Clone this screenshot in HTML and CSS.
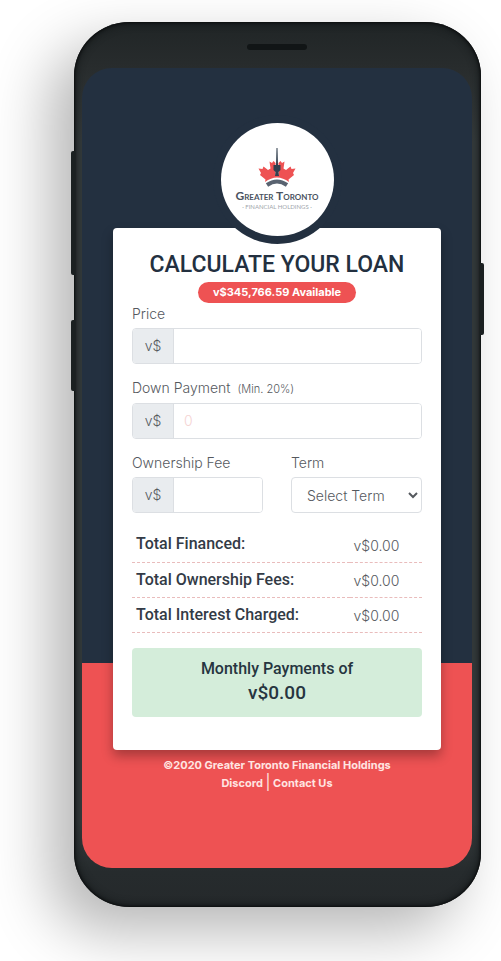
FILE: index.html
```html
<!DOCTYPE html>
<html lang="en">
<head>
<meta charset="utf-8">
<meta name="viewport" content="width=device-width, initial-scale=1">
<title>Calculate Your Loan</title>
<link rel="stylesheet" href="styles.css">
</head>
<body>
<div class="phone">
  <span class="side-key volume"></span>
  <span class="side-key assistant"></span>
  <span class="side-key power"></span>
  <div class="speaker"></div>
  <div class="screen">
    <div class="logo">
      <svg class="logo-mark" viewBox="0 0 40 40" aria-hidden="true">
        <path fill="#ee5253" d="M8 36 L8.500 33.500 L3 29 L4 27 L1.500 22.500 L5.500 23 L6.500 20.500 L11 24 L13.500 22.500 L12.500 15.500 L15 17 L16.500 15 L18.500 17 V29 H21.500 V17 L23.500 15 L25 17 L27.500 15.500 L26.500 22.500 L29 24 L33.500 20.500 L34.500 23 L38.500 22.500 L36 27 L37 29 L31.500 33.500 L32 36 Q20 27 8 36Z"/>
        <path fill="none" stroke="#596370" stroke-width="4" d="M10 39 Q20 32 30 39"/>
        <path fill="#33404f" d="M19.500 2H20.500L21 19H23.500V24L21.500 26L22 30H18L18.500 26L16.500 24V19H19Z"/>
      </svg>
      <span class="logo-name">Greater Toronto</span>
      <span class="logo-sub">· FINANCIAL HOLDINGS ·</span>
    </div>
    <main class="card">
      <h1>CALCULATE YOUR LOAN</h1>
      <span class="badge">v$345,766.59 Available</span>
      <form class="fields">
        <div class="field wide">
          <label for="price">Price</label>
          <div class="group"><span class="prefix">v$</span><input id="price" type="text"></div>
        </div>
        <div class="field wide">
          <label for="down">Down Payment <small>(Min. 20%)</small></label>
          <div class="group"><span class="prefix">v$</span><input id="down" type="text" placeholder="0"></div>
        </div>
        <div class="field">
          <label for="fee">Ownership Fee</label>
          <div class="group"><span class="prefix">v$</span><input id="fee" type="text"></div>
        </div>
        <div class="field">
          <label for="term">Term</label>
          <select id="term"><option>Select Term</option></select>
        </div>
      </form>
      <table class="totals">
        <tr><th scope="row">Total Financed:</th><td>v$0.00</td></tr>
        <tr><th scope="row">Total Ownership Fees:</th><td>v$0.00</td></tr>
        <tr><th scope="row">Total Interest Charged:</th><td>v$0.00</td></tr>
      </table>
      <div class="payment">
        <p>Monthly Payments of</p>
        <strong>v$0.00</strong>
      </div>
    </main>
    <footer>
      <p>©2020 Greater Toronto Financial Holdings</p>
      <p><a href="#">Discord</a> <span class="bar">|</span> <a href="#">Contact Us</a></p>
    </footer>
  </div>
</div>
</body>
</html>
```
FILE: styles.css
```css
* { box-sizing: border-box; }

body {
  margin: 0;
  padding: 22px 20px 54px 74px;
  background: #fff;
  color: #55595e;
  font: 300 14px/20px Inter, "Liberation Sans", sans-serif;
  overflow-x: hidden;
}

h1, p { margin: 0; }

.phone {
  position: relative;
  padding: 22px 9px 39px 8px;
  border-radius: 56px / 54px;
  background: linear-gradient(#202526, #282c2d 46px, #343a3b 120px, #343a3b 800px, #262b2d 850px, #25292b);
  box-shadow:
    inset 0 0 2px 1px #0d0f10,
    inset 0 0 8px 1px #111516,
    -24px 24px 60px rgba(0, 0, 0, 0.29);
}

.side-key {
  position: absolute;
  width: 4px;
  background: #1b2021;
}

.volume { left: -3px; top: 129px; height: 124px; border-radius: 2px 0 0 2px; }
.assistant { left: -3px; top: 298px; height: 71px; border-radius: 2px 0 0 2px; }
.power { right: -3px; top: 241px; height: 72px; border-radius: 0 2px 2px 0; }

.speaker {
  width: 60px;
  height: 6px;
  margin: 0 auto 18px;
  border-radius: 3px;
  background: #111516;
}

.screen {
  display: flex;
  flex-direction: column;
  align-items: center;
  padding: 55px 31px 76px;
  border-radius: 30px;
  background: linear-gradient(#233040 595px, #ee5253 595px);
}

.logo {
  position: relative;
  z-index: 1;
  display: flex;
  flex-direction: column;
  align-items: center;
  width: 113px;
  height: 113px;
  margin-bottom: -8px;
  padding-top: 23px;
  border-radius: 50%;
  background: #fff;
  box-shadow: 0 0 0 8px #233040;
  white-space: nowrap;
}

.logo-mark { width: 40px; height: 40px; overflow: visible; }

.logo-name {
  margin-top: 3px;
  color: #4a5360;
  font: bold small-caps 12px/14px Lato, sans-serif;
}

.logo-sub {
  color: #a0a5ab;
  font: 6px/8px Lato, sans-serif;
}

.card {
  display: flex;
  flex-direction: column;
  width: 100%;
  padding: 23px 19px 33px;
  border-radius: 4px;
  background: #fff;
  box-shadow: 0 6px 12px rgba(0, 0, 0, 0.3);
}

h1 {
  color: #233040;
  font: 500 23px/28px Roboto, sans-serif;
  text-align: center;
  white-space: nowrap;
}

.badge {
  align-self: center;
  margin-top: 3px;
  padding: 0 15px;
  border-radius: 11px;
  background: #ee5253;
  color: #fff;
  font-size: 11px;
  font-weight: 700;
  line-height: 21px;
}

.fields {
  display: grid;
  grid-template-columns: 1fr 1fr;
  gap: 14px 28px;
  margin-top: 1px;
}

.wide { grid-column: 1 / -1; }

.field {
  display: flex;
  flex-direction: column;
  gap: 4px;
  min-width: 0;
}

.field small { margin-left: 3px; font-size: 11px; }

.group, select {
  height: 36px;
  border: 1px solid #dcdfe3;
  border-radius: 4px;
}

.group { display: flex; overflow: hidden; }

.prefix {
  width: 41px;
  border-right: 1px solid #dcdfe3;
  background: #e9ecef;
  line-height: 34px;
  text-align: center;
}

input {
  flex: 1;
  min-width: 0;
  padding: 0 10px;
  border: 0;
  background: #fff;
  color: inherit;
  font: inherit;
}

input::placeholder { color: #f5d3d3; opacity: 1; }

select {
  width: 100%;
  padding: 0 0 0 11px;
  background: #fff;
  color: inherit;
  font: inherit;
}

.totals {
  width: 100%;
  margin-top: 14px;
  border-collapse: collapse;
  table-layout: fixed;
}

.totals th, .totals td {
  height: 35px;
  border-bottom: 1px dashed #e9bcbc;
  text-align: left;
}

.totals th {
  width: 75%;
  padding: 0 4px;
  color: #333b46;
  font: 500 16px/20px Roboto, sans-serif;
}

.totals td { padding: 3px 4px 0; }

.payment {
  margin-top: 15px;
  padding: 9px 0 12px;
  border-radius: 4px;
  background: #d4edda;
  color: #263540;
  font: 500 16px/24px Roboto, sans-serif;
  text-align: center;
}

.payment strong { display: block; font-size: 19px; font-weight: 500; }

footer {
  margin-top: 6px;
  color: #ffe5e2;
  font-size: 11px;
  font-weight: 700;
  line-height: 18px;
  text-align: center;
  white-space: nowrap;
}

footer a { color: inherit; text-decoration: none; }

.bar { font-size: 15px; font-weight: 400; line-height: 16px; }
```
